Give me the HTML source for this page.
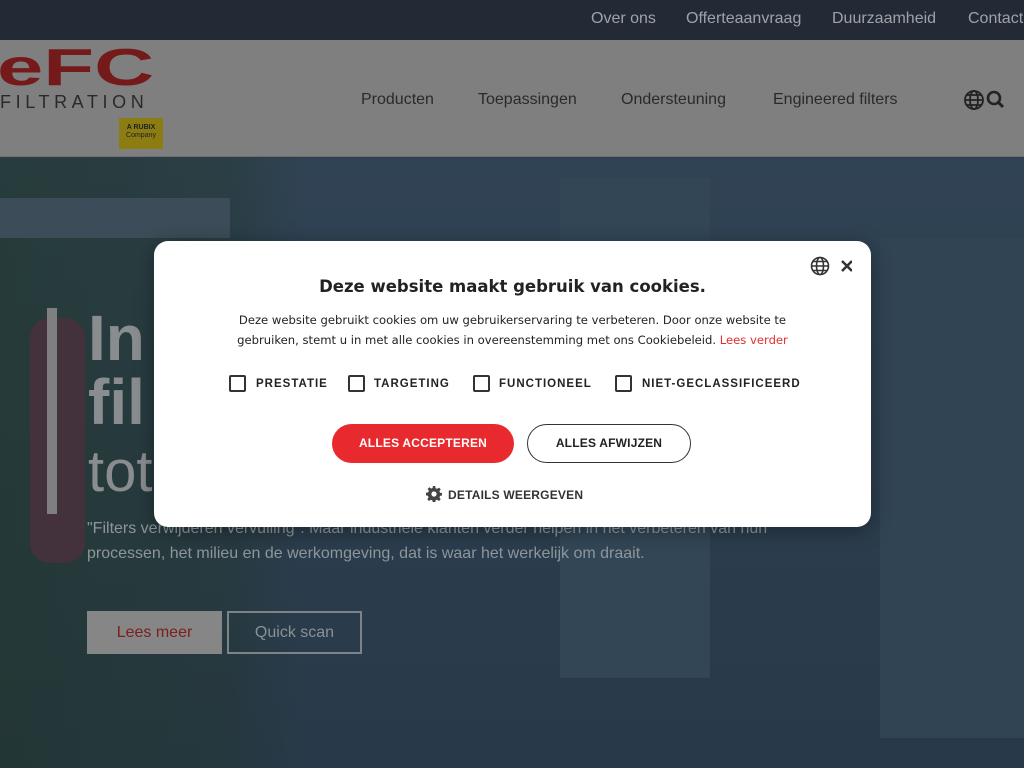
<!DOCTYPE html>
<html><head><meta charset="utf-8">
<style>
*{margin:0;padding:0;box-sizing:border-box}
body{width:1024px;height:768px;overflow:hidden;font-family:"Liberation Sans",sans-serif;position:relative;background:#2b3c4b}
.top{position:absolute;top:0;left:0;width:1024px;height:40px;background:#232a35;color:#9ea3aa;font-size:16px}
.top span{position:absolute;top:10px}
.hdr{position:absolute;top:40px;left:0;width:1024px;height:117px;background:#7f7f7f;border-bottom:1px solid #6f6f6f}
.nav{position:absolute;font-size:16px;color:#2a2a2a}
.hero{position:absolute;top:158px;left:0;width:1024px;height:610px;background:
linear-gradient(90deg,rgba(30,52,35,.5) 0,rgba(30,52,35,.3) 230px,rgba(0,0,0,0) 300px),
linear-gradient(180deg,#304354 0,#2c3e4e 50%,#283949 100%)}
.pipe{position:absolute}
.modal{position:absolute;left:154px;top:241px;width:717px;height:286px;background:#fff;border-radius:14px;box-shadow:0 4px 20px rgba(0,0,0,.35);text-align:center;color:#222}
.cb{position:absolute;top:134px;width:17px;height:17px;border:2px solid #333;border-radius:2px}
.lab{position:absolute;top:137px;font-size:11.5px;font-weight:bold;letter-spacing:1px;color:#222;white-space:nowrap}
</style></head><body>
<div class="top">
<span style="left:591px">Over ons</span>
<span style="left:686px">Offerteaanvraag</span>
<span style="left:832px">Duurzaamheid</span>
<span style="left:968px">Contact</span>
</div>
<div class="hdr">
<div style="position:absolute;left:-3px;top:2px;font-size:52px;font-weight:bold;color:#751a1a;line-height:52px;transform:scaleX(1.6);transform-origin:left top">eFC</div>
<div style="position:absolute;left:0;top:52px;font-size:18px;color:#2a2a2a;letter-spacing:4.6px">FILTRATION</div>
<div style="position:absolute;left:119px;top:78px;width:44px;height:31px;background:#8c7d12;font-size:7px;color:#222;line-height:8px;padding-top:6px;text-align:center"><b>A RUBIX</b><br>Company</div>
<span class="nav" style="left:361px;top:51px">Producten</span>
<span class="nav" style="left:478px;top:51px">Toepassingen</span>
<span class="nav" style="left:621px;top:51px">Ondersteuning</span>
<span class="nav" style="left:773px;top:51px">Engineered filters</span>
<svg style="position:absolute;left:963px;top:49px" width="42" height="22" viewBox="0 0 42 22" fill="none" stroke="#222" stroke-width="1.8"><circle cx="11" cy="11" r="9"/><ellipse cx="11" cy="11" rx="4" ry="9"/><path d="M2 11h18M4 6h14M4 16h14"/><circle cx="31" cy="9" r="6" stroke-width="2.6"/><path d="M35 13l5 5" stroke-width="3"/></svg>
</div>
<div class="hero">
<div class="pipe" style="left:0;top:40px;width:230px;height:40px;background:#3c4c58"></div>
<div class="pipe" style="left:30px;top:160px;width:55px;height:245px;background:#43323b;border-radius:20px"></div>
<div class="pipe" style="left:560px;top:20px;width:150px;height:500px;background:#324656"></div>
<div class="pipe" style="left:880px;top:80px;width:144px;height:500px;background:#314454"></div>
<div style="position:absolute;left:47px;top:150px;width:10px;height:206px;background:#7d7f80"></div>
<div style="position:absolute;left:88px;top:148px;font-size:64px;font-weight:bold;color:#8a8d90;line-height:64px">In<br>fil</div>
<div style="position:absolute;left:88px;top:280px;font-size:58px;color:#8a8d90">tot</div>
<div style="position:absolute;left:87px;top:358px;font-size:16px;color:#8e969c;line-height:25px">"Filters verwijderen vervuiling". Maar industriële klanten verder helpen in het verbeteren van hun<br>processen, het milieu en de werkomgeving, dat is waar het werkelijk om draait.</div>
<div style="position:absolute;left:87px;top:453px;width:135px;height:43px;background:#868686;color:#7a2020;font-size:16px;text-align:center;line-height:43px">Lees meer</div>
<div style="position:absolute;left:227px;top:453px;width:135px;height:43px;border:2px solid #7d8387;color:#8a9196;font-size:16px;text-align:center;line-height:39px">Quick scan</div>
</div>
<div class="modal">
<svg style="position:absolute;left:656px;top:14px" width="42" height="22" viewBox="0 0 42 22" fill="none" stroke="#333" stroke-width="1.6"><circle cx="10" cy="11" r="8.5"/><ellipse cx="10" cy="11" rx="3.5" ry="8.5"/><path d="M1.5 11h17M3 6.5h14M3 15.5h14"/><path d="M32 6l10 10M42 6L32 16" stroke-width="2.5"/></svg>
<div style="position:absolute;top:36px;width:100%;font-family:'DejaVu Sans',sans-serif;font-size:16.5px;font-weight:bold;color:#222">Deze website maakt gebruik van cookies.</div>
<div style="position:absolute;top:69px;width:100%;font-family:'DejaVu Sans',sans-serif;font-size:11.6px;line-height:20px;color:#222">Deze website gebruikt cookies om uw gebruikerservaring te verbeteren. Door onze website te<br>gebruiken, stemt u in met alle cookies in overeenstemming met ons Cookiebeleid. <span style="color:#e03030">Lees verder</span></div>
<span class="cb" style="left:75px"></span><span class="lab" style="left:102px">PRESTATIE</span>
<span class="cb" style="left:194px"></span><span class="lab" style="left:220px">TARGETING</span>
<span class="cb" style="left:319px"></span><span class="lab" style="left:345px">FUNCTIONEEL</span>
<span class="cb" style="left:461px"></span><span class="lab" style="left:488px">NIET-GECLASSIFICEERD</span>
<div style="position:absolute;left:178px;top:183px;width:182px;height:39px;border-radius:20px;background:#e82a2e;color:#fff;font-size:12px;font-weight:bold;line-height:39px;letter-spacing:.2px">ALLES ACCEPTEREN</div>
<div style="position:absolute;left:373px;top:183px;width:164px;height:39px;border-radius:20px;border:1.5px solid #333;color:#222;font-size:12px;font-weight:bold;line-height:36px;letter-spacing:.2px">ALLES AFWIJZEN</div>
<div style="position:absolute;top:245px;left:272px;font-size:12px;font-weight:bold;color:#333;letter-spacing:.2px;white-space:nowrap"><svg width="16" height="16" viewBox="0 0 16 16" style="vertical-align:-3px;margin-right:6px"><path fill="#444" d="M6.8 0h2.4l.4 2.2 1.5.7 1.9-1.3 1.7 1.7-1.3 1.9.7 1.5 2.2.4v2.4l-2.2.4-.7 1.5 1.3 1.9-1.7 1.7-1.9-1.3-1.5.7-.4 2.2H6.8l-.4-2.2-1.5-.7-1.9 1.3-1.7-1.7 1.3-1.9-.7-1.5L0 9.2V6.8l2.2-.4.7-1.5-1.3-1.9 1.7-1.7 1.9 1.3 1.5-.7z"/><circle cx="8" cy="8" r="2.6" fill="#fff"/></svg>DETAILS WEERGEVEN</div>
</div>
</body></html>
